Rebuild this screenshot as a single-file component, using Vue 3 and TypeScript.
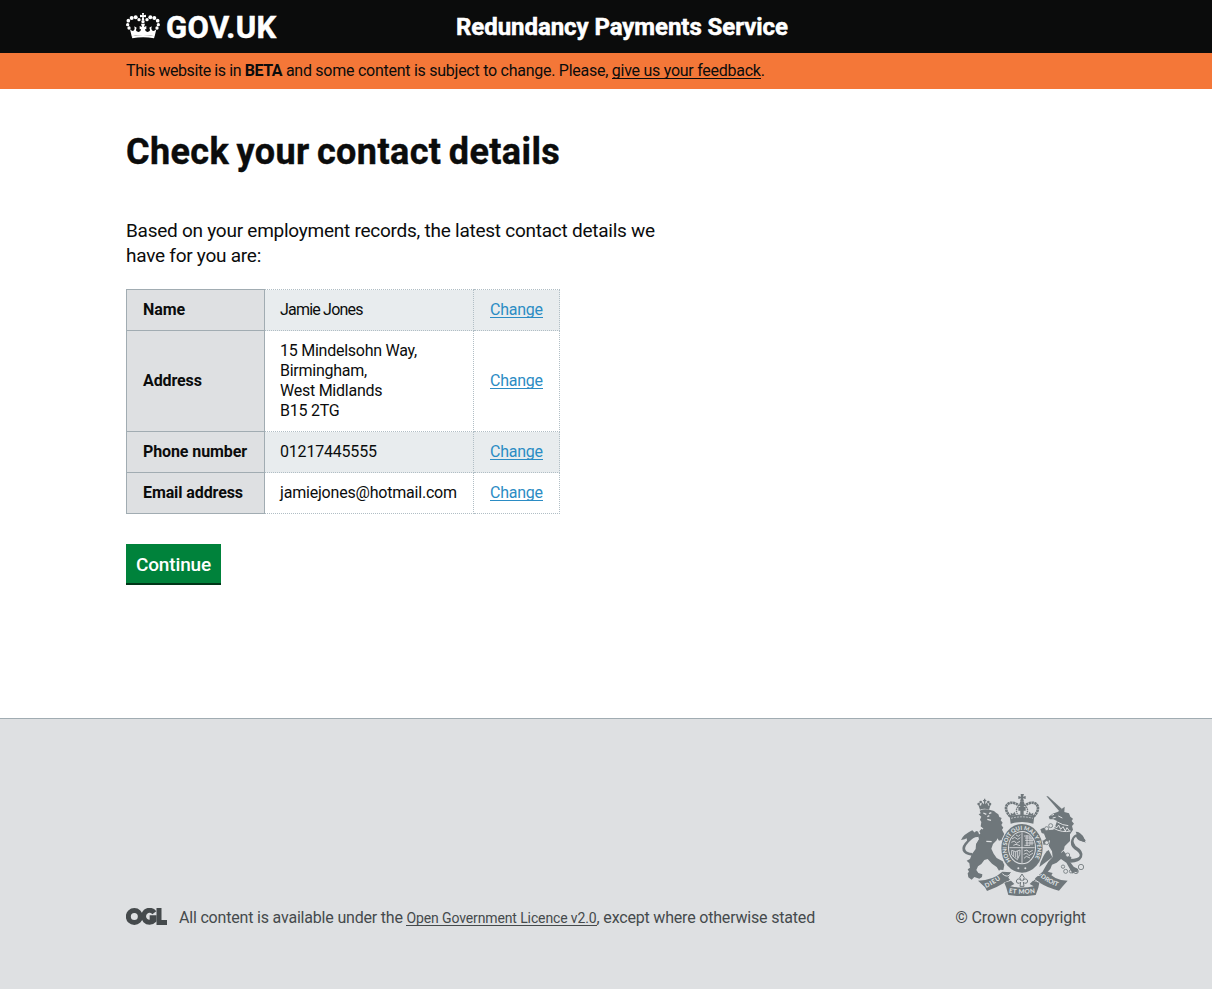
<script setup lang="ts">
interface Detail {
  label: string
  lines: string[]
  spacing?: string
}

const details: Detail[] = [
  { label: 'Name', lines: ['Jamie Jones'], spacing: 'tight' },
  { label: 'Address', lines: ['15 Mindelsohn Way,', 'Birmingham,', 'West Midlands', 'B15 2TG'] },
  { label: 'Phone number', lines: ['01217445555'], spacing: 'digits' },
  { label: 'Email address', lines: ['jamiejones@hotmail.com'], spacing: 'email' },
]
</script>

<template>
  <div class="page">
    <header class="header">
      <div class="wrap header-inner">
        <a class="logo">
          <svg class="crown" viewBox="0 0 102 78" aria-hidden="true">
            <g fill="#fff">
              <path d="M12 49 L17 70 Q51 62 86 70 L91 49 Q80 59 76 48 L77 40 L70 44 Q76 55 64 57 Q57 56 57 48 L61 49 V39 L54 42 L57 32 H45 L48 42 L41 39 V49 L45 48 Q45 56 38 57 Q26 55 32 44 L25 40 L26 48 Q22 59 12 49Z" />
              <path d="M17 70 Q51 62 86 70 L84 76 Q51 70 19 76Z" />
              <path d="M48 0 H54 L53 7 L60 5 V13 L53 12 L55 22 H47 L49 12 L42 13 V5 L49 7Z" />
              <circle cx="51" cy="26" r="5" />
              <circle cx="39" cy="20" r="5" /><circle cx="63" cy="20" r="5" />
              <circle cx="29" cy="13" r="6" /><circle cx="73" cy="13" r="6" />
              <circle cx="17" cy="15" r="6" /><circle cx="85" cy="15" r="6" />
              <circle cx="7" cy="23" r="5.5" /><circle cx="95" cy="23" r="5.5" />
              <circle cx="5" cy="35" r="5" /><circle cx="97" cy="35" r="5" />
              <circle cx="9" cy="45" r="5" /><circle cx="93" cy="45" r="5" />
            </g>
          </svg>
          <span class="logo-text">GOV.UK</span>
        </a>
        <span class="service">Redundancy Payments Service</span>
      </div>
    </header>

    <div class="beta">
      <p class="wrap beta-text"><span class="beta-lead">This website is in <strong>BETA</strong></span> and some content is subject to change. Please, <a class="beta-link">give us your feedback</a>.</p>
    </div>

    <main class="wrap main">
      <h1 class="title">Check your contact details</h1>
      <p class="intro">Based on your employment records, the latest contact details we have for you are:</p>
      <table class="details">
        <colgroup><col class="c1" /><col class="c2" /><col class="c3" /></colgroup>
        <tbody>
          <tr v-for="d in details" :key="d.label">
            <th scope="row">{{ d.label }}</th>
            <td><div v-for="line in d.lines" :key="line" :class="d.spacing">{{ line }}</div></td>
            <td><a class="change">Change</a></td>
          </tr>
        </tbody>
      </table>
      <button class="button" type="button">Continue</button>
    </main>

    <footer class="footer">
      <div class="wrap footer-inner">
        <div class="licence">
          <svg class="ogl" viewBox="0 0 123 51" aria-hidden="true">
            <g fill="none" stroke="#454a4c" stroke-width="15">
              <circle cx="25" cy="25.5" r="18" />
              <path d="M85 14 A18 18 0 1 0 84 37 V29 H71" />
              <path d="M99 0 V43.500 H123" />
            </g>
          </svg>
          <p class="licence-text"><span class="l1">All content is available under the</span> <a class="licence-link">Open Government Licence v2.0</a><span class="l2">, except where otherwise stated</span></p>
        </div>
        <div class="copyright">
          <svg class="crest" viewBox="15 12 375 306" aria-hidden="true">
            <defs>
              <path id="garter" d="M165 213 A46 55 0 1 1 231 213" />
              <path id="ribbonLeft" d="M90 294 Q116 283 142 261" />
              <path id="ribbonMid" d="M158 308 Q198 315 240 308" />
              <path id="ribbonRight" d="M253 261 Q280 283 310 292" />
            </defs>
            <g fill="#6f777b">
              <!-- lion -->
              <path d="M67 44 L72 59 Q85 53 99 59 L104 44 L97 47 L93 37 L88 43 V34 H91 V30 H88 V26 H84 V30 H81 V34 H84 V43 L78 37 L75 47Z" />
              <circle cx="68" cy="42" r="4" /><circle cx="74" cy="36" r="4" />
              <circle cx="97" cy="36" r="4" /><circle cx="102" cy="42" r="4" />
              <path d="M71 62 Q86 55 103 60 L114 63 L120 68 L127 73 L130 81 L137 84 L134 91 L140 98 L136 105 L142 113 L138 119 L145 133 L152 140 L155 151 L144 157 L136 150 L129 152 L124 145 L122 151 L111 162 L106 176 L113 191 L122 204 L140 214 L145 225 L142 240 L133 239 L129 242 L122 231 L108 221 L95 207 L85 210 L76 222 L66 229 L61 240 L67 249 L79 253 L78 261 L70 266 L55 261 L47 269 L37 262 L35 250 L39 245 L35 238 L42 233 L40 220 L32 212 L42 207 L48 192 L59 177 L60 163 L69 148 L67 140 L73 130 L70 124 L78 115 L74 109 L76 96 L72 89 L76 80 L68 73 L74 70Z" />
              <path d="M76 137 L68 151 L61 162 L65 171 L76 162 L86 145Z" />
              <path d="M48 197 Q25 194 20 182 Q15 169 34 151 Q48 137 54 129 Q65 115 69 132 L77 136 L66 141 Q54 139 38 157 Q23 173 29 181 Q32 188 49 189Z" />
              <path d="M49 121 Q21 134 15 150 Q28 148 32 145 L34 157 Q48 148 57 129Z" />
              <!-- unicorn -->
              <path d="M271 19 L276 19 L318 57 L310 64Z" />
              <path d="M326 50 L325 66 L339 70 L343 80 L351 86 L347 93 L354 101 L348 108 L351 119 L342 133 L342 153 L326 169 L323 183 L333 196 L346 201 L344 218 L353 230 L366 237 L365 248 L356 245 L350 251 L340 234 L331 218 L315 207 L302 218 L288 224 L283 237 L275 245 L290 249 L286 256 L270 258 L258 248 L269 229 L277 215 L290 201 L288 184 L278 167 L282 152 L271 145 L266 132 L257 129 L253 118 L263 113 L278 120 L292 119 L298 108 L303 93 L292 88 L281 88 L278 80 L290 71 L306 65Z" />
              <path d="M264 131 L276 133 L284 145 L275 157 L264 165 L251 158 L250 147 L261 152 L270 146Z" />
              <path d="M278 180 Q267 185 254 216 L250 231 L265 220 L289 202Z" />
              <path d="M340 207 Q370 206 371 197 Q373 189 355 178 Q340 165 346 149 Q353 133 365 132 Q384 130 386 154 L390 158 L378 153 Q367 154 360 140 Q346 150 359 168 Q386 184 378 202 Q370 218 344 218Z" />
              <path d="M359 125 Q375 125 381 142 L389 151 L386 156 Q369 155 364 139Z" />
              <!-- central crown -->
              <path d="M194 12 H204 L201 20 L209 18 V27 L201 25 L204 34 H192 L195 25 L187 27 V18 L195 20Z" />
              <circle cx="198" cy="40" r="7" />
              <path d="M161 78 Q198 69 235 78 L232 101 Q198 91 164 101Z" />
              <path d="M193 76 V62 H187 V51 H193 L190 43 H206 L203 51 H209 V62 H203 V76Z" />
              <path d="M165 78 L164 68 L171 72 L175 65 L180 74 Z M231 78 L232 68 L225 72 L221 65 L216 74Z" />
            </g>
            <g fill="none" stroke="#6f777b">
              <path d="M163 80 C132 47 163 25 189 47 M233 80 C264 47 233 25 207 47" stroke-width="8" stroke-dasharray="7 1.5" />
              <path d="M192 45 Q176 55 184 72 M204 45 Q220 55 212 72" stroke-width="4" stroke-dasharray="5 2" />
            </g>
            <g fill="none" stroke="#dee0e2">
              <path d="M165 85 Q198 76 231 85" stroke-width="2" stroke-dasharray="6 3" />
              <path d="M82 69 L91 73 M99 71 L106 68 M94 80 L100 77 M94 88 L105 91 M91 154 L107 155 M74 112 L81 117" stroke-width="4" />
              <path d="M287 76 L294 73 M307 78 L319 84 M290 84 L299 82 M304 96 Q320 106 337 107 M293 115 Q319 129 344 123 M295 109 L303 113 L308 105 L314 118 L321 110 L328 123 L333 113 L341 124" stroke-width="3" />
              <path d="M316 187 Q326 173 338 177" stroke-width="3" />
            </g>
            <!-- shield inside the garter -->
            <ellipse cx="198" cy="175" rx="65" ry="76" fill="#dee0e2" />
            <ellipse cx="198" cy="175" rx="62" ry="73" fill="#6f777b" />
            <ellipse cx="198" cy="173" rx="42" ry="50" fill="#dee0e2" />
            <ellipse cx="198" cy="173" rx="39" ry="47" fill="#6f777b" />
            <g fill="none" stroke="#dee0e2" stroke-width="2.5">
              <path d="M198 127 V219 M160 173 H236" />
              <path d="M168 147 L176 142 L185 148 L193 143 M166 157 L175 153 L181 160 L192 154 M172 166 L180 163 L192 167 M180 135 L187 139 L193 134" />
              <path d="M204 138 H222 V166 H205 M207 144 H231 M207 151 H232 M209 159 H233 M213 135 V168 M228 144 V166" />
              <path d="M167 181 V195 L184 209 Q194 193 192 180 Q178 189 167 181 M173 184 V198 M179 185 V202 M185 183 V204" />
              <path d="M204 183 L213 180 L219 187 L230 181 M203 193 L212 189 L219 197 L231 189 M204 205 L211 199 L222 204" />
            </g>
            <g class="motto" fill="#dee0e2">
              <text font-size="17"><textPath href="#garter" textLength="230">HONI SOIT QUI MAL Y PENSE</textPath></text>
            </g>
            <circle cx="187" cy="235" r="3" fill="#dee0e2" /><circle cx="208" cy="235" r="3" fill="#dee0e2" />
            <!-- motto ribbon -->
            <path d="M66 272 Q111 271 139 245 L165 247 L157 263 L163 271 L149 276 Q120 294 93 303 L87 292Z M258 247 L277 245 Q292 270 335 272 L319 290 L309 302 Q279 296 247 276 L233 272 L239 263Z" fill="#6f777b" />
            <path d="M139 251 Q151 263 160 255 L165 249 L169 261 Q161 277 145 278 L151 291 Q199 300 247 291 L250 278 Q237 272 229 261 L233 248 Q242 263 257 253" fill="none" stroke="#dee0e2" stroke-width="3" />
            <path d="M145 278 L165 272 L175 282 L163 289 Q198 296 233 289 L221 282 L231 272 L250 278 L247 293 L239 315 Q198 322 157 315 L151 293Z" fill="#6f777b" />
            <g class="motto" fill="#dee0e2" font-size="19">
              <text><textPath href="#ribbonLeft" textLength="52">DIEU</textPath></text>
              <text><textPath href="#ribbonMid" textLength="80">ET MON</textPath></text>
              <text><textPath href="#ribbonRight" textLength="59">DROIT</textPath></text>
            </g>
            <path d="M198 252 L205 263 L200 272 Q211 261 215 273 Q215 281 206 280 L202 276 L204 289 H192 L194 276 L190 280 Q181 281 181 273 Q185 261 196 272 L191 263Z" fill="#dee0e2" stroke="#6f777b" stroke-width="3" />
            <g fill="none" stroke="#6f777b" stroke-width="2.500">
              <circle cx="321" cy="230" r="5" /><circle cx="329" cy="244" r="6" />
              <circle cx="345" cy="244" r="5" /><circle cx="360" cy="244" r="7" />
              <circle cx="375" cy="231" r="8" /><circle cx="335" cy="195" r="6" fill="#dee0e2" />
              <circle cx="284" cy="107" r="6" fill="#dee0e2" /><circle cx="272" cy="116" r="6" fill="#dee0e2" />
              <circle cx="272" cy="158" r="6" fill="#dee0e2" />
            </g>
          </svg>
          <a class="copy-text">© Crown copyright</a>
        </div>
      </div>
    </footer>
  </div>
</template>

<style>
body {
  margin: 0;
  background: #fff;
}
</style>

<style scoped>
.page {
  display: flex;
  flex-direction: column;
  height: 989px;
  overflow: hidden;
  font-family: Roboto, Arial, sans-serif;
  font-size: 16px;
  line-height: 20px;
  letter-spacing: -0.25px;
  color: #0b0c0c;
}
.wrap {
  width: 960px;
  margin: 0 auto;
}
.header {
  height: 53px;
  background: #0b0c0c;
  color: #fff;
}
.header-inner {
  display: flex;
  height: 53px;
}
.logo {
  display: flex;
  width: 330px;
}
.crown {
  width: 34px;
  height: 26px;
  margin-top: 13px;
}
.logo-text {
  margin: 11px 0 0 6px;
  font-size: 31px;
  line-height: 34px;
  font-weight: 700;
  letter-spacing: 0.4px;
  -webkit-text-stroke: 0.5px #fff;
}
.service {
  padding-top: 12px;
  font-size: 24px;
  line-height: 30px;
  font-weight: 700;
  letter-spacing: -0.06px;
  -webkit-text-stroke: 0.5px #fff;
}
.beta {
  height: 36px;
  background: #f47738;
}
.beta-text {
  padding-top: 8px;
  letter-spacing: -0.26px;
}
.beta-lead {
  letter-spacing: -0.42px;
}
.beta-link {
  border-bottom: 1px solid #0b0c0c;
}
.beta-link,
.change,
.licence-link {
  display: inline-block;
  line-height: 15px;
}
.main {
  flex: 1;
}
.title {
  margin: 43px 0 0;
  font-size: 36px;
  line-height: 40px;
  font-weight: 700;
  letter-spacing: 0.4px;
  word-spacing: -2px;
  -webkit-text-stroke: 0.4px #0b0c0c;
}
.intro {
  width: 560px;
  margin: 46px 0 0;
  font-size: 19px;
  line-height: 25px;
}
.details {
  width: 434px;
  margin-top: 21px;
  table-layout: fixed;
  border-collapse: collapse;
}
.c1 {
  width: 138px;
}
.c2 {
  width: 209px;
}
.c3 {
  width: 86px;
}
.details th,
.details td {
  padding: 10px 0 10px 16px;
  text-align: left;
  vertical-align: middle;
}
.details th {
  background: #dee0e2;
  border: 1px solid #a1acb2;
  letter-spacing: -0.1px;
}
.details td {
  padding-left: 15px;
  border: 1px dotted #b1bec5;
}
.details td:last-child {
  padding-left: 16px;
}
.details tr:nth-child(odd) td {
  background: #e8ecee;
}
.digits {
  letter-spacing: -0.2px;
}
.tight {
  letter-spacing: -0.8px;
}
.email {
  letter-spacing: -0.2px;
}
.change {
  color: #2b8cc4;
  border-bottom: 1px solid #2b8cc4;
}
.button {
  display: block;
  width: 95px;
  height: 39px;
  margin: 30px 0 0;
  padding: 2px 0 0;
  border: 0;
  background: #00823b;
  box-shadow: 0 2px 0 #003618;
  color: #fff;
  font: 500 19px/25px Roboto, Arial, sans-serif;
  letter-spacing: -0.15px;
}
.footer {
  height: 270px;
  border-top: 1px solid #a1acb2;
  background: #dee0e2;
  color: #454a4c;
}
.footer-inner {
  display: flex;
  justify-content: space-between;
  align-items: flex-end;
  height: 209px;
}
.licence {
  display: flex;
}
.ogl {
  width: 41px;
  height: 17px;
}
.licence-text {
  margin: 0 0 0 12px;
  white-space: nowrap;
}
.l1,
.l2 {
  letter-spacing: -0.19px;
}
.licence-link {
  font-size: 14px;
  line-height: 14px;
  letter-spacing: -0.12px;
  border-bottom: 1px solid #454a4c;
}
.copyright {
  display: flex;
  flex-direction: column;
  align-items: flex-end;
}
.crest {
  width: 125px;
  height: 102px;
  margin-bottom: 12px;
}
.copy-text {
  letter-spacing: -0.1px;
}
.motto {
  font-family: Lato, sans-serif;
  font-weight: 900;
  letter-spacing: 0;
}
</style>
